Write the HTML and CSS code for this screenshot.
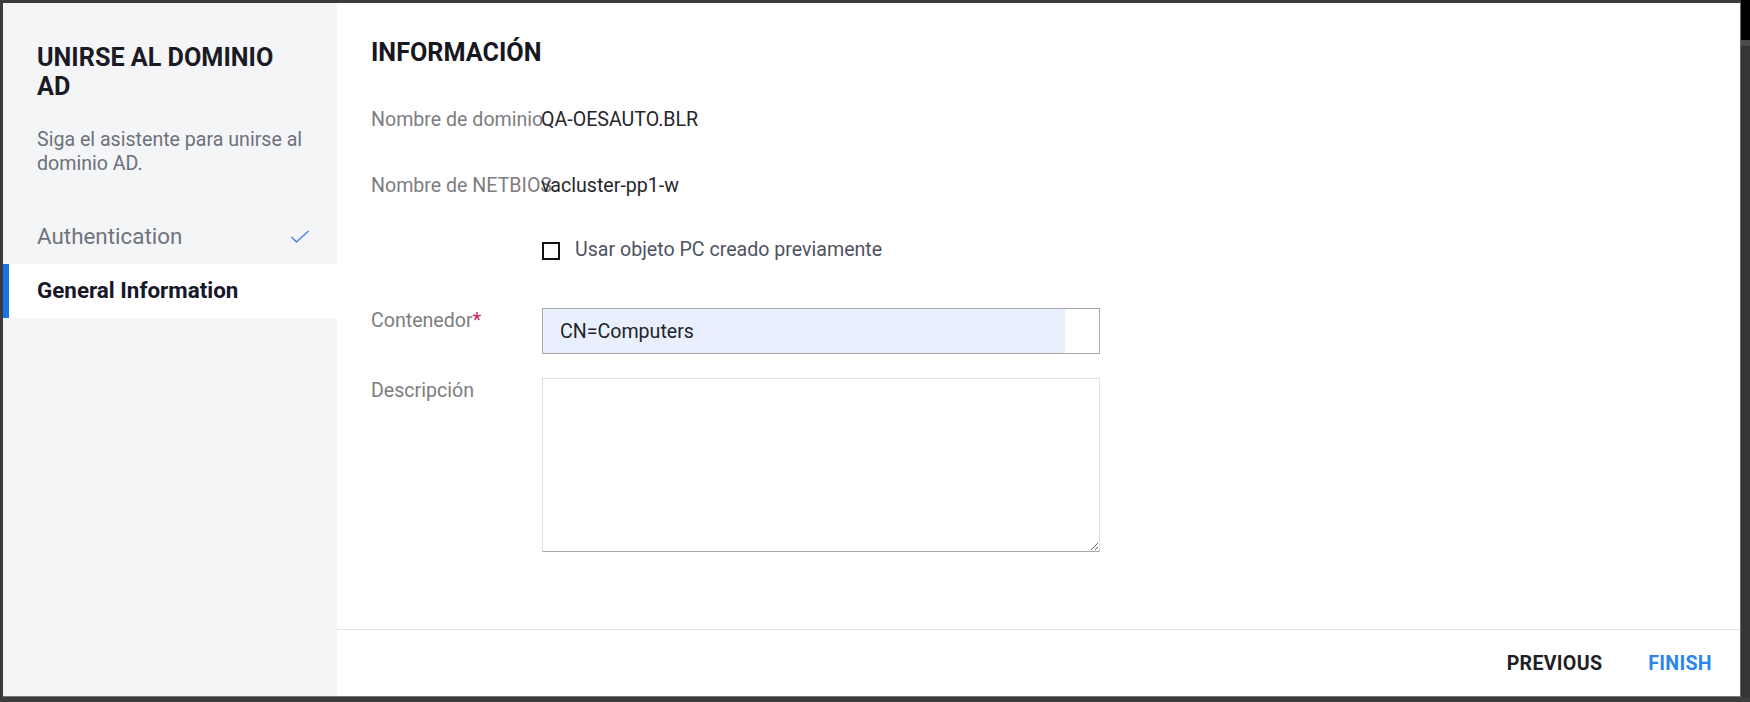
FILE: index.html
```html
<!DOCTYPE html>
<html lang="es">
<head>
<meta charset="utf-8">
<title>Unirse al dominio AD</title>
<link rel="stylesheet" href="styles.css">
</head>
<body>
<div class="frame">
  <div class="dialog">
    <aside class="sidebar">
      <h1 class="side-title">UNIRSE AL DOMINIO AD</h1>
      <p class="side-sub">Siga el asistente para unirse al dominio AD.</p>
      <nav class="steps">
        <div class="step done">
          <span>Authentication</span>
          <svg class="check" width="20" height="14" viewBox="0 0 20 14"><polyline points="1.5,7 6.5,12 18.5,1" fill="none" stroke="#4f86e3" stroke-width="1.6"/></svg>
        </div>
        <div class="step active"><span>General Information</span></div>
      </nav>
    </aside>
    <section class="main">
      <div class="body">
        <h2 class="heading">INFORMACIÓN</h2>
        <div class="row info r1">
          <span class="label">Nombre de dominio</span>
          <span class="value">QA-OESAUTO.BLR</span>
        </div>
        <div class="row info r2">
          <span class="label">Nombre de NETBIOS</span>
          <span class="value">vacluster-pp1-w</span>
        </div>
        <div class="row r3">
          <span class="label"></span>
          <label class="cb"><span class="box"></span><span>Usar objeto PC creado previamente</span></label>
        </div>
        <div class="row r4">
          <span class="label lab-top">Contenedor<span class="req">*</span></span>
          <input class="txt" type="text" value="CN=Computers">
        </div>
        <div class="row r5">
          <span class="label lab-top">Descripción</span>
          <textarea class="area"></textarea>
        </div>
      </div>
      <footer class="footer">
        <button class="btn prev">PREVIOUS</button>
        <button class="btn finish">FINISH</button>
      </footer>
    </section>
  </div>
  <div class="gutter"><div class="gutter-top"></div></div>
</div>
</body>
</html>
```

FILE: styles.css
```css
* { box-sizing: border-box; }
html, body { margin: 0; padding: 0; }
body {
  width: 1750px;
  height: 702px;
  background: #3c3c3c;
  font-family: Roboto, "Noto Sans", sans-serif;
  overflow: hidden;
}
.frame {
  display: flex;
  height: 702px;
  padding: 3px 0 5px 3px;
}
.dialog {
  width: 1738px;
  height: 694px;
  display: flex;
  background: #fff;
  border-right: 1px solid #6a6a6a;
  border-bottom: 1px solid #777;
}
.gutter {
  flex: 1;
  margin-top: -3px;
  background: #353535;
}
.gutter-top {
  height: 46px;
  background: #000;
  border-bottom: 6px solid #4a4a4a;
}
.sidebar {
  width: 334px;
  flex: none;
  background: #f4f5f7;
  padding-top: 40px;
}
.side-title {
  margin: 0;
  padding: 0 30px 0 34px;
  font-size: 25.2px;
  line-height: 29px;
  font-weight: 700;
  color: #1b1b25;
}
.side-sub {
  margin: 27px 0 0;
  padding: 0 30px 0 34px;
  font-size: 19.6px;
  line-height: 24px;
  color: #6d717b;
}
.steps {
  margin-top: 34px;
}
.step {
  height: 54px;
  display: flex;
  align-items: center;
  justify-content: space-between;
  padding: 0 27px 2px 34px;
  font-size: 22.4px;
  color: #6f737c;
}
.step .check { margin-top: 2px; }
.step.active {
  background: #fff;
  color: #17172a;
  font-weight: 700;
  border-left: 6px solid #1c74e2;
  padding-left: 28px;
}
.main {
  flex: 1;
  display: flex;
  flex-direction: column;
}
.body {
  flex: 1;
  padding: 35px 0 0 34px;
  border-bottom: 1px solid #e2e2e2;
}
.heading {
  margin: 0;
  font-size: 25.2px;
  line-height: 30px;
  font-weight: 700;
  color: #17171f;
}
.row {
  display: grid;
  grid-template-columns: 171px 558px;
  font-size: 19.6px;
  line-height: 24px;
}
.r1 { margin-top: 40px; }
.r2 { margin-top: 42px; }
.r3 { margin-top: 40px; }
.r4 { margin-top: 46px; }
.r5 { margin-top: 24px; }
.label {
  color: #7d7d80;
  white-space: nowrap;
}
.value {
  color: #26262b;
  margin-left: -1px;
}
.lab-top { padding-top: 1px; }
.req { color: #cc1f5b; }
.cb {
  display: flex;
  align-items: center;
  gap: 15px;
  color: #4f5360;
}
.box {
  width: 18px;
  height: 18px;
  border: 2px solid #111;
  background: #fff;
  margin-top: 2px;
}
.txt {
  width: 558px;
  height: 46px;
  border: 1px solid #a8a8a8;
  padding: 0 0 0 17px;
  font-family: inherit;
  font-size: 19.6px;
  color: #23232a;
  background: linear-gradient(to right, #e8f0fe calc(100% - 34px), #fff calc(100% - 34px));
  outline: none;
  margin: 0;
}
.area {
  width: 558px;
  height: 174px;
  border: 1px solid #e0e0e0;
  border-bottom-color: #a8a8a8;
  resize: both;
  font-family: inherit;
  font-size: 19.6px;
  margin: 0;
  padding: 8px;
  background: #fff;
  display: block;
}
.footer {
  height: 66px;
  flex: none;
  display: flex;
  justify-content: flex-end;
  align-items: center;
  padding: 0 20px 0 0;
}
.btn {
  border: 0;
  background: transparent;
  font-family: inherit;
  font-size: 19.6px;
  font-weight: 700;
  letter-spacing: 0.3px;
  padding: 8px;
  margin: 0 0 0 30px;
  cursor: pointer;
}
.prev { color: #1e1e24; }
.finish { color: #2a86ea; }
```
